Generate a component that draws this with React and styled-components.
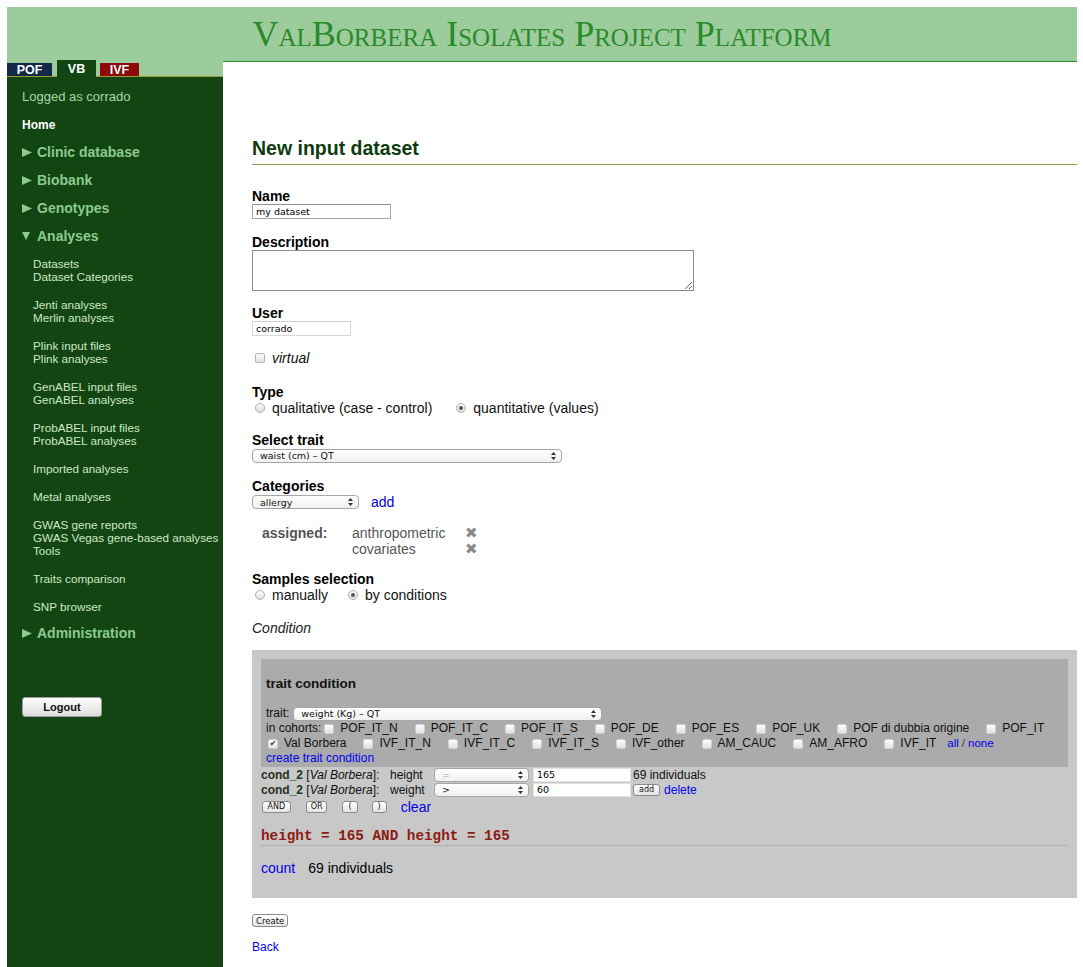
import React from "react";
import styled, { createGlobalStyle } from "styled-components";

const GlobalStyle = createGlobalStyle`
  html, body {
    background: #fff;
  }
  body {
    margin: 7px 6px 0 7px;
    font-family: "Liberation Sans", Arial, sans-serif;
    color: #000;
  }
`;

const Header = styled.header`
  height: 53px;
  background: #9ccc9c;
  display: flex;
  justify-content: center;
`;

const Title = styled.h1`
  margin: 9px 0 0;
  font-family: "Liberation Serif", "Times New Roman", serif;
  font-variant: small-caps;
  font-weight: normal;
  font-size: 36px;
  line-height: 36px;
  color: #2a8a2a;
  white-space: nowrap;
`;

const Layout = styled.div`
  display: flex;
  align-items: stretch;
  min-height: calc(100vh - 60px);
`;

const Sidebar = styled.aside`
  width: 216px;
  flex: none;
  display: flex;
  flex-direction: column;
  background: #134513;
`;

const TabBar = styled.div`
  height: 16px;
  display: flex;
  align-items: flex-end;
  gap: 4px;
  background: #9ccc9c;
  border-bottom: 1px solid #9c9a32;
`;

const Tab = styled.div`
  width: ${(p) => p.$w}px;
  height: ${(p) => (p.$active ? 17 : 13)}px;
  margin-bottom: ${(p) => (p.$active ? -1 : 0)}px;
  margin-left: ${(p) => p.$ml || 0}px;
  background: ${(p) => p.$bg};
  color: #fff;
  font-size: 12.5px;
  font-weight: bold;
  line-height: ${(p) => (p.$active ? 19 : 14)}px;
  text-align: center;
  position: relative;
`;

const Nav = styled.nav`
  padding: 12px 0 0 15px;
  display: flex;
  flex-direction: column;
  align-items: flex-start;
`;

const Logged = styled.div`
  font-size: 13px;
  line-height: 16px;
  color: #a9d6a9;
  margin-bottom: 12px;
`;

const HomeLink = styled.a`
  font-size: 12px;
  font-weight: bold;
  line-height: 16px;
  color: #fff;
  text-decoration: none;
  margin-bottom: 11px;
`;

const Section = styled.div`
  display: flex;
  align-items: center;
  font-size: 14px;
  font-weight: bold;
  line-height: 16px;
  color: #8ccb8c;
  margin-bottom: ${(p) => p.$mb ?? 12}px;
`;

const Caret = styled.span`
  width: 15px;
  display: inline-flex;
  align-items: center;
`;

const SubGroup = styled.div`
  padding-left: 11px;
  display: flex;
  flex-direction: column;
  margin-bottom: ${(p) => p.$mb ?? 15}px;
`;

const SubLink = styled.a`
  font-size: 11.7px;
  line-height: 13px;
  color: #cde8c5;
  text-decoration: none;
  white-space: nowrap;
`;

const LogoutButton = styled.button`
  margin-top: 44px;
  width: 80px;
  height: 20px;
  padding: 0;
  border: 1px solid #9a9a9a;
  border-radius: 3px;
  background: linear-gradient(#ffffff, #dcdcdc);
  font-family: "Liberation Sans", Arial, sans-serif;
  font-size: 11px;
  font-weight: bold;
  color: #111;
`;

const Main = styled.main`
  flex: 1;
  min-width: 0;
  display: flex;
  flex-direction: column;
`;

const TopEdge = styled.div`
  height: 1px;
  background: #9ccc9c;
  border-bottom: 1px solid #2e8b2e;
`;

const Content = styled.div`
  padding: 0 0 12px 29px;
  display: flex;
  flex-direction: column;
  align-items: flex-start;
`;

const Heading = styled.h2`
  align-self: stretch;
  margin: 74px 0 0;
  padding-bottom: 4px;
  border-bottom: 1px solid #8f9a4a;
  font-size: 19.5px;
  line-height: 24px;
  color: #0e3b0e;
`;

const Label = styled.div`
  margin-top: ${(p) => p.$mt}px;
  font-size: 14px;
  font-weight: bold;
  line-height: 16px;
`;

const TextInput = styled.input`
  box-sizing: border-box;
  width: ${(p) => p.$w}px;
  height: 15px;
  margin: 0;
  padding: 0 3px;
  border: 1px solid ${(p) => (p.$light ? "#d8d8d8" : "#a8a8a8")};
  border-top-color: ${(p) => (p.$light ? "#cfcfcf" : "#8e8e8e")};
  background: #fff;
  font-family: "DejaVu Sans", Verdana, sans-serif;
  font-size: 9.5px;
  color: #000;
  outline: none;
`;

const TextArea = styled.textarea`
  box-sizing: border-box;
  width: 442px;
  height: 41px;
  margin: 0;
  border: 1px solid #8c8c8c;
  background: #fff;
`;

const Row = styled.div`
  display: flex;
  align-items: center;
  margin-top: ${(p) => p.$mt || 0}px;
  margin-left: ${(p) => p.$ml || 0}px;
  height: ${(p) => p.$h || 16}px;
  font-size: ${(p) => p.$fs || 14}px;
`;

const Option = styled.label`
  display: inline-flex;
  align-items: center;
  gap: 7px;
  margin-right: ${(p) => p.$mr ?? 20}px;
  font-style: ${(p) => (p.$italic ? "italic" : "normal")};
  color: #111;
`;

const Check = styled.span`
  box-sizing: border-box;
  width: 10px;
  height: 10px;
  flex: none;
  display: inline-flex;
  align-items: center;
  justify-content: center;
  border: 1px solid ${(p) => (p.$faint ? "#d0d0d0" : "#b4b4b4")};
  border-radius: 2px;
  background: linear-gradient(#fdfdfd, #e2e2e2);
  font-family: "DejaVu Sans", sans-serif;
  font-size: 8px;
  line-height: 1;
  color: #333;
`;

const Radio = styled.span`
  box-sizing: border-box;
  width: 10px;
  height: 10px;
  flex: none;
  display: inline-flex;
  align-items: center;
  justify-content: center;
  border: 1px solid #b0b0b0;
  border-radius: 50%;
  background: linear-gradient(#fdfdfd, #dedede);

  &::after {
    content: "";
    display: ${(p) => (p.$on ? "block" : "none")};
    width: 4px;
    height: 4px;
    border-radius: 50%;
    background: #555;
  }
`;

const SelectBox = styled.div`
  box-sizing: border-box;
  width: ${(p) => p.$w}px;
  height: 14px;
  flex: none;
  display: inline-flex;
  align-items: center;
  justify-content: space-between;
  padding: 0 5px 0 7px;
  border: 1px solid #a6a6a6;
  border-radius: 4px;
  background: linear-gradient(#ffffff, #f1f1f1);
  font-family: "DejaVu Sans", Verdana, sans-serif;
  font-size: 9.5px;
  color: ${(p) => (p.$muted ? "#aaa" : "#111")};
`;

const Link = styled.a`
  color: #0000ee;
  text-decoration: none;
  font-size: ${(p) => p.$fs || 14}px;
  margin-left: ${(p) => p.$ml || 0}px;
  margin-right: ${(p) => p.$mr || 0}px;
  cursor: pointer;
`;

const Assigned = styled.div`
  margin-top: 15px;
  padding-left: 10px;
  display: grid;
  grid-template-columns: 90px 113px auto;
  align-items: center;
  font-size: 14px;
  line-height: 16px;
  color: #555;
`;

const AssignedLabel = styled.span`
  font-weight: bold;
  grid-row: span 2;
  align-self: start;
`;

const Remove = styled.span`
  font-family: "DejaVu Sans", sans-serif;
  font-size: 15px;
  line-height: 16px;
  color: #8a8a8a;
`;

const Condition = styled.div`
  margin-top: 17px;
  font-size: 14px;
  font-style: italic;
  line-height: 16px;
  color: #222;
`;

const Panel = styled.section`
  align-self: stretch;
  margin-top: 14px;
  padding: 9px 9px 22px;
  background: #c8c8c8;
`;

const TraitBox = styled.div`
  padding: 17px 5px 1px;
  background: #ababab;
  font-size: 12px;
  line-height: 15px;
  color: #111;
`;

const BoxTitle = styled.div`
  font-size: 13.5px;
  font-weight: bold;
  line-height: 16px;
  margin-bottom: 14px;
`;

const Cohort = styled.label`
  display: inline-flex;
  align-items: center;
  gap: 6px;
  margin-right: 17px;
  white-space: nowrap;
`;

const CondRow = styled.div`
  display: flex;
  align-items: center;
  height: 15px;
  font-size: 12px;
  color: #111;
`;

const CondName = styled.span`
  width: 129px;
  flex: none;
  white-space: nowrap;

  b {
    color: #1f331f;
  }
`;

const CondTrait = styled.span`
  width: 44px;
  flex: none;
`;

const ValueInput = styled(TextInput)`
  height: 14px;
  margin: 0 2px 0 4px;
  border-color: #e2e2e2;
`;

const MiniButton = styled.button`
  height: 12px;
  padding: 0 ${(p) => p.$px ?? 5}px;
  margin-right: ${(p) => p.$mr || 0}px;
  border: 1px solid #8a8a8a;
  border-radius: 3px;
  background: linear-gradient(#ffffff, #e4e4e4);
  font-family: "DejaVu Sans", Verdana, sans-serif;
  font-size: 8px;
  line-height: 10px;
  color: #111;
`;

const Formula = styled.div`
  margin-top: 13px;
  border-bottom: 1px dotted #9a9a9a;
  font-family: "Liberation Mono", "Courier New", monospace;
  font-size: 14.3px;
  font-weight: bold;
  line-height: 17px;
  color: #8c1c12;
`;

const Count = styled.div`
  margin-top: 14px;
  font-size: 14px;
  line-height: 16px;
  display: flex;
  gap: 13px;
`;

const CreateButton = styled(MiniButton)`
  margin-top: 16px;
  height: 13px;
  padding: 0 3px;
  font-size: 8.5px;
`;

const Back = styled(Link)`
  margin-top: 13px;
  font-size: 12px;
  line-height: 14px;
`;

const RightArrow = () => (
  <svg width="10" height="9" viewBox="0 0 10 9">
    <polygon points="0,0 10,4.5 0,9" fill="currentColor" />
  </svg>
);

const DownArrow = () => (
  <svg width="8" height="8" viewBox="0 0 8 8">
    <polygon points="0,0 8,0 4,8" fill="currentColor" />
  </svg>
);

const SelectArrows = () => (
  <svg width="5" height="8" viewBox="0 0 5 8">
    <path d="M2.5 0 L5 3 H0 Z M0 5 H5 L2.5 8 Z" fill="#333" />
  </svg>
);

function Select({ w, value, muted }) {
  return (
    <SelectBox $w={w} $muted={muted}>
      <span>{value}</span>
      <SelectArrows />
    </SelectBox>
  );
}

const analysisGroups = [
  ["Datasets", "Dataset Categories"],
  ["Jenti analyses", "Merlin analyses"],
  ["Plink input files", "Plink analyses"],
  ["GenABEL input files", "GenABEL analyses"],
  ["ProbABEL input files", "ProbABEL analyses"],
  ["Imported analyses"],
  ["Metal analyses"],
  ["GWAS gene reports", "GWAS Vegas gene-based analyses", "Tools"],
  ["Traits comparison"],
  ["SNP browser"],
];

const cohortsTop = [
  "POF_IT_N",
  "POF_IT_C",
  "POF_IT_S",
  "POF_DE",
  "POF_ES",
  "POF_UK",
  "POF di dubbia origine",
  "POF_IT",
];

const cohortsBottom = [
  "IVF_IT_N",
  "IVF_IT_C",
  "IVF_IT_S",
  "IVF_other",
  "AM_CAUC",
  "AM_AFRO",
  "IVF_IT",
];

function SideMenu() {
  return (
    <Sidebar>
      <TabBar>
        <Tab $w={45} $bg="#14284a">POF</Tab>
        <Tab $w={39} $bg="#134513" $active $ml={1}>
          VB
        </Tab>
        <Tab $w={39} $bg="#8b0a0a">IVF</Tab>
      </TabBar>
      <Nav>
        <Logged>Logged as corrado</Logged>
        <HomeLink>Home</HomeLink>
        {["Clinic database", "Biobank", "Genotypes"].map((s) => (
          <Section key={s}>
            <Caret>
              <RightArrow />
            </Caret>
            {s}
          </Section>
        ))}
        <Section $mb={13}>
          <Caret>
            <DownArrow />
          </Caret>
          Analyses
        </Section>
        {analysisGroups.map((group, i) => (
          <SubGroup key={i} $mb={i === analysisGroups.length - 1 ? 12 : 15}>
            {group.map((item) => (
              <SubLink key={item}>{item}</SubLink>
            ))}
          </SubGroup>
        ))}
        <Section>
          <Caret>
            <RightArrow />
          </Caret>
          Administration
        </Section>
        <LogoutButton>Logout</LogoutButton>
      </Nav>
    </Sidebar>
  );
}

function TraitCondition() {
  return (
    <TraitBox>
      <BoxTitle>trait condition</BoxTitle>
      <Row $h={15} $fs={12}>
        <span style={{ marginRight: 4 }}>trait:</span>
        <Select w={309} value="weight (Kg) – QT" />
      </Row>
      <Row $h={15} $fs={12}>
        <span style={{ marginRight: 3 }}>in cohorts:</span>
        {cohortsTop.map((c) => (
          <Cohort key={c}>
            <Check $faint />
            {c}
          </Cohort>
        ))}
      </Row>
      <Row $h={15} $fs={12} $ml={2}>
        <Cohort>
          <Check $faint>✔</Check>
          Val Borbera
        </Cohort>
        {cohortsBottom.map((c) => (
          <Cohort key={c}>
            <Check $faint />
            {c}
          </Cohort>
        ))}
        <Link $fs={11.5} $ml={-6}>
          all
        </Link>
        <span style={{ fontSize: 11.5, color: "#333", margin: "0 3px" }}>/</span>
        <Link $fs={11.5}>none</Link>
      </Row>
      <Row $h={15}>
        <Link $fs={12}>create trait condition</Link>
      </Row>
    </TraitBox>
  );
}

function CondLine({ trait, op, value, muted, last }) {
  return (
    <CondRow>
      <CondName>
        <b>cond_2</b> [<i>Val Borbera</i>]:
      </CondName>
      <CondTrait>{trait}</CondTrait>
      <Select w={95} value={op} muted={muted} />
      <ValueInput $w={98} defaultValue={value} />
      {last ? (
        <>
          <MiniButton $px={5} $mr={4}>
            add
          </MiniButton>
          <Link $fs={12}>delete</Link>
        </>
      ) : (
        <span>69 individuals</span>
      )}
    </CondRow>
  );
}

export default function App() {
  return (
    <>
      <GlobalStyle />
      <Header>
        <Title>ValBorbera Isolates Project Platform</Title>
      </Header>
      <Layout>
        <SideMenu />
        <Main>
          <TopEdge />
          <Content>
            <Heading>New input dataset</Heading>

            <Label $mt={23}>Name</Label>
            <TextInput $w={139} defaultValue="my dataset" />

            <Label $mt={15}>Description</Label>
            <TextArea />

            <Label $mt={14}>User</Label>
            <TextInput $w={99} $light defaultValue="corrado" />

            <Row $mt={13} $h={18} $ml={3}>
              <Option $italic>
                <Check />
                virtual
              </Option>
            </Row>

            <Label $mt={17}>Type</Label>
            <Row $ml={3}>
              <Option $mr={24}>
                <Radio />
                qualitative (case - control)
              </Option>
              <Option>
                <Radio $on />
                quantitative (values)
              </Option>
            </Row>

            <Label $mt={16}>Select trait</Label>
            <Row $h={15}>
              <Select w={310} value="waist (cm) – QT" />
            </Row>

            <Label $mt={15}>Categories</Label>
            <Row>
              <Select w={107} value="allergy" />
              <Link $ml={12}>add</Link>
            </Row>

            <Assigned>
              <AssignedLabel>assigned:</AssignedLabel>
              <span>anthropometric</span>
              <Remove>✖</Remove>
              <span>covariates</span>
              <Remove>✖</Remove>
            </Assigned>

            <Label $mt={14}>Samples selection</Label>
            <Row $ml={3}>
              <Option>
                <Radio />
                manually
              </Option>
              <Option>
                <Radio $on />
                by conditions
              </Option>
            </Row>

            <Condition>Condition</Condition>

            <Panel>
              <TraitCondition />
              <CondLine trait="height" op="=" value="165" muted />
              <CondLine trait="weight" op=">" value="60" last />
              <Row $mt={2} $ml={1}>
                <MiniButton $px={4.5} $mr={15}>
                  AND
                </MiniButton>
                <MiniButton $px={4} $mr={15}>
                  OR
                </MiniButton>
                <MiniButton $px={5} $mr={14}>
                  (
                </MiniButton>
                <MiniButton $px={5} $mr={14}>
                  )
                </MiniButton>
                <Link>clear</Link>
              </Row>
              <Formula>height = 165 AND height = 165</Formula>
              <Count>
                <Link>count</Link>
                <span>69 individuals</span>
              </Count>
            </Panel>

            <CreateButton>Create</CreateButton>
            <Back>Back</Back>
          </Content>
        </Main>
      </Layout>
    </>
  );
}
